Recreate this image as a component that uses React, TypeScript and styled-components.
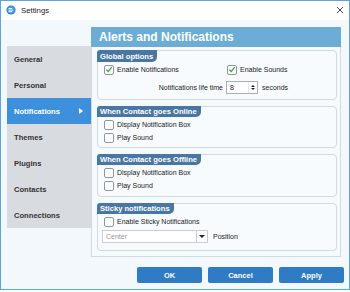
import * as React from 'react';
import styled, { createGlobalStyle } from 'styled-components';

const GlobalStyle = createGlobalStyle`
    html, body {
        margin: 0;
        padding: 0;
        background: #ffffff;
    }
    body {
        font-family: "Liberation Sans", Arial, sans-serif;
    }
    * {
        box-sizing: border-box;
    }
`;

const Window = styled.div`
    width: 350px;
    height: 290px;
    border: 1px solid #5ea5e0;
    background: #f2f8fc;
    display: flex;
    flex-direction: column;
`;

const TitleBar = styled.div`
    height: 19px;
    background: #ffffff;
    display: flex;
    align-items: center;
    padding: 0 5px 1px 5px;
    gap: 5px;
`;

const TitleText = styled.span`
    flex: 1;
    font-size: 7.8px;
    color: #222222;
`;

const Body = styled.div`
    flex: 1;
    display: flex;
    flex-direction: column;
    padding: 7px 6px 5px 6px;
`;

const Content = styled.div`
    display: flex;
    align-items: flex-start;
`;

const Sidebar = styled.div`
    width: 84px;
    margin-top: 19px;
    background: #d8dce1;
    display: flex;
    flex-direction: column;
`;

const SideItem = styled.div<{ $active?: boolean }>`
    height: 26px;
    display: flex;
    align-items: center;
    justify-content: space-between;
    padding: 0 8px 0 7px;
    font-size: 7.6px;
    font-weight: bold;
    color: ${p => (p.$active ? '#ffffff' : '#333333')};
    background: ${p => (p.$active ? '#3d90dc' : 'transparent')};
`;

const Arrow = styled.span`
    width: 0;
    height: 0;
    border-top: 3.5px solid transparent;
    border-bottom: 3.5px solid transparent;
    border-left: 4px solid #ffffff;
`;

const Panel = styled.div`
    width: 250px;
    display: flex;
    flex-direction: column;
`;

const PanelHeader = styled.div`
    height: 20px;
    background: #6badd6;
    color: #ffffff;
    font-size: 12px;
    font-weight: bold;
    display: flex;
    align-items: center;
    padding-left: 8px;
`;

const PanelBody = styled.div`
    background: #f5fafd;
    border: 1px solid #d3d9df;
    border-top: none;
    padding: 3px 3px 5px 5px;
    display: flex;
    flex-direction: column;
    gap: 6px;
`;

const Group = styled.div<{ $pb: number }>`
    border: 1px solid #d3d9df;
    border-radius: 4px;
    background: #f8fbfe;
    display: flex;
    flex-direction: column;
    padding-bottom: ${p => p.$pb}px;
`;

const GroupTab = styled.div<{ $h: number }>`
    align-self: flex-start;
    height: ${p => p.$h}px;
    margin: -1px 0 0 -1px;
    padding: 0 4px 0 3px;
    background: #4a76a3;
    color: #ffffff;
    font-size: 7.6px;
    font-weight: bold;
    display: flex;
    align-items: center;
    border-radius: 3px 0 5px 0;
`;

const Row = styled.div<{ $h?: number; $mt?: number }>`
    height: ${p => p.$h ?? 13}px;
    margin-top: ${p => p.$mt ?? 0}px;
    padding-left: 6px;
    display: flex;
    align-items: center;
    gap: 3px;
    font-size: 7px;
    color: #222222;
`;

const OptionsGrid = styled.div`
    display: grid;
    grid-template-columns: 119px auto;
    grid-template-rows: 15px 19px;
    column-gap: 4px;
    row-gap: 1px;
    padding-left: 6px;
    font-size: 7px;
    color: #222222;
`;

const Cell = styled.div<{ $end?: boolean }>`
    display: flex;
    align-items: center;
    gap: 3px;
    justify-content: ${p => (p.$end ? 'flex-end' : 'flex-start')};
`;

const Label = styled.span<{ $ml: number }>`
    margin-left: ${p => p.$ml}px;
`;

const Box = styled.span`
    width: 10px;
    height: 10px;
    border: 1px solid #8f969d;
    border-radius: 2px;
    background: #ffffff;
    display: inline-flex;
    align-items: center;
    justify-content: center;
    flex-shrink: 0;
`;

const Spin = styled.div`
    width: 32px;
    height: 13px;
    border: 1px solid #a8b0b8;
    background: #ffffff;
    display: flex;
    align-items: center;
    justify-content: space-between;
    padding-left: 3px;
    margin-left: -1px;
`;

const SpinButtons = styled.div`
    width: 9px;
    height: 100%;
    display: flex;
    flex-direction: column;
    align-items: center;
    justify-content: center;
    gap: 1px;
    border-left: 1px solid #e2e6ea;
`;

const Combo = styled.div`
    width: 106px;
    height: 13px;
    border: 1px solid #c8ced4;
    background: #ffffff;
    display: flex;
    align-items: center;
    color: #9a9a9a;
    margin-left: -2px;
`;

const ComboText = styled.span`
    flex: 1;
    padding-left: 3px;
`;

const ComboButton = styled.span`
    width: 11px;
    height: 100%;
    border-left: 1px solid #c8ced4;
    display: flex;
    align-items: center;
    justify-content: center;
`;

const Tri = styled.span<{ $up?: boolean; $size: number }>`
    width: 0;
    height: 0;
    border-left: ${p => p.$size}px solid transparent;
    border-right: ${p => p.$size}px solid transparent;
    ${p =>
        p.$up
            ? `border-bottom: ${p.$size}px solid #222;`
            : `border-top: ${p.$size}px solid #222;`}
`;

const ButtonRow = styled.div`
    margin-top: 10px;
    display: flex;
    justify-content: flex-end;
    gap: 6px;
    margin-right: -1px;
`;

const Button = styled.div`
    width: 65px;
    height: 16px;
    background: #2f7cc5;
    border-radius: 2px;
    color: #ffffff;
    font-size: 7.5px;
    font-weight: bold;
    display: flex;
    align-items: center;
    justify-content: center;
`;

const AppIcon = () => (
    <svg width="10" height="10" viewBox="0 0 10 10">
        <circle cx="5" cy="5" r="4.6" fill="#2d84d4" />
        <circle cx="5" cy="5" r="3.6" fill="#4a9be2" />
        <rect x="2.6" y="3" width="3.6" height="0.9" fill="#ffffff" />
        <rect x="2.6" y="4.6" width="4.6" height="0.9" fill="#ffffff" />
        <rect x="2.6" y="6.2" width="3.6" height="0.9" fill="#ffffff" />
    </svg>
);

const CloseIcon = () => (
    <svg width="8" height="8" viewBox="0 0 8 8">
        <path d="M1 1 L7 7 M7 1 L1 7" stroke="#333" strokeWidth="0.9" />
    </svg>
);

const Check = ({ checked }: { checked?: boolean }) => (
    <Box>
        {checked && (
            <svg width="9" height="9" viewBox="0 0 9 9">
                <path d="M1.5 4.6 L3.6 6.8 L7.6 1.8" fill="none" stroke="#3aa53a" strokeWidth="1.5" />
            </svg>
        )}
    </Box>
);

const sections = ['General', 'Personal', 'Notifications', 'Themes', 'Plugins', 'Contacts', 'Connections'];

export default function App() {
    return (
        <>
            <GlobalStyle />
            <Window>
                <TitleBar>
                    <AppIcon />
                    <TitleText>Settings</TitleText>
                    <CloseIcon />
                </TitleBar>
                <Body>
                    <Content>
                        <Sidebar>
                            {sections.map(s => (
                                <SideItem key={s} $active={s === 'Notifications'}>
                                    {s}
                                    {s === 'Notifications' && <Arrow />}
                                </SideItem>
                            ))}
                        </Sidebar>
                        <Panel>
                            <PanelHeader>Alerts and Notifications</PanelHeader>
                            <PanelBody>
                                <Group $pb={2}>
                                    <GroupTab $h={12}>Global options</GroupTab>
                                    <OptionsGrid>
                                        <Cell>
                                            <Check checked />
                                            Enable Notifications
                                        </Cell>
                                        <Cell>
                                            <Check checked />
                                            Enable Sounds
                                        </Cell>
                                        <Cell $end>Notifications life time</Cell>
                                        <Cell>
                                            <Spin>
                                                8
                                                <SpinButtons>
                                                    <Tri $up $size={2} />
                                                    <Tri $size={2} />
                                                </SpinButtons>
                                            </Spin>
                                            <Label $ml={1}>seconds</Label>
                                        </Cell>
                                    </OptionsGrid>
                                </Group>
                                <Group $pb={3}>
                                    <GroupTab $h={11}>When Contact goes Online</GroupTab>
                                    <Row $mt={1}>
                                        <Check />
                                        Display Notification Box
                                    </Row>
                                    <Row>
                                        <Check />
                                        Play Sound
                                    </Row>
                                </Group>
                                <Group $pb={4}>
                                    <GroupTab $h={11}>When Contact goes Offline</GroupTab>
                                    <Row $mt={1}>
                                        <Check />
                                        Display Notification Box
                                    </Row>
                                    <Row>
                                        <Check />
                                        Play Sound
                                    </Row>
                                </Group>
                                <Group $pb={6}>
                                    <GroupTab $h={11}>Sticky notifications</GroupTab>
                                    <Row $mt={1}>
                                        <Check />
                                        Enable Sticky Notifications
                                    </Row>
                                    <Row $h={15} $mt={1}>
                                        <Combo>
                                            <ComboText>Center</ComboText>
                                            <ComboButton>
                                                <Tri $size={3} />
                                            </ComboButton>
                                        </Combo>
                                        <Label $ml={2}>Position</Label>
                                    </Row>
                                </Group>
                            </PanelBody>
                        </Panel>
                    </Content>
                    <ButtonRow>
                        <Button>OK</Button>
                        <Button>Cancel</Button>
                        <Button>Apply</Button>
                    </ButtonRow>
                </Body>
            </Window>
        </>
    );
}
